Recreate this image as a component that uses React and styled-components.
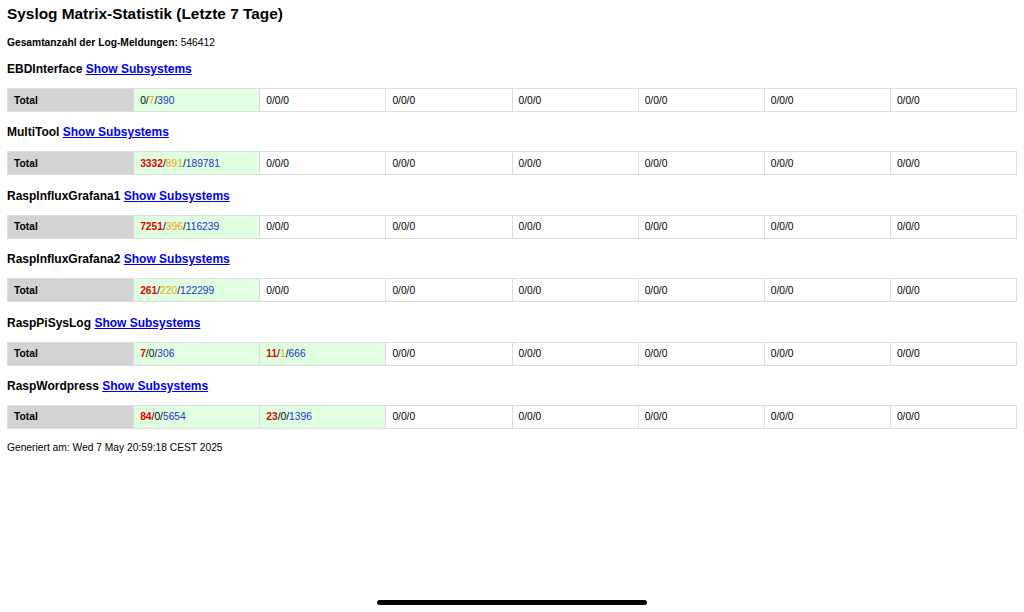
import React from "react";
import styled, { createGlobalStyle } from "styled-components";

const Global = createGlobalStyle`
  html, body { margin: 0; padding: 0; background: #fff; }
  body { font-family: "Liberation Sans", Arial, sans-serif; color: #000; }
`;

const Page = styled.div`
  padding: 4px 7px 0 7px;
  display: flex;
  flex-direction: column;
  min-height: 612px;
  box-sizing: border-box;
`;

const Title = styled.h1`
  font-size: 15.4px;
  font-weight: bold;
  margin: 0;
  line-height: 20px;
`;

const Summary = styled.p`
  font-size: 10.25px;
  margin: 12px 0 0 0;
  line-height: 13px;
`;

const Section = styled.section`
  display: flex;
  flex-direction: column;
`;

const Heading = styled.h3`
  font-size: 12px;
  font-weight: bold;
  margin: ${(p) => (p.$first ? "12px" : "12.4px")} 0 0 0;
  line-height: 16px;
`;

const Link = styled.a`
  color: #0000ee;
  text-decoration: underline;
  cursor: pointer;
`;

const Table = styled.table`
  margin-top: 11px;
  width: 100%;
  border-collapse: collapse;
  table-layout: fixed;
  font-size: 10.25px;
`;

const Cell = styled.td`
  border: 1px solid #ddd;
  height: 23px;
  padding: 0 6px;
  box-sizing: border-box;
  background: ${(p) => (p.$label ? "#d3d3d3" : p.$active ? "#e0ffe0" : "#fff")};
  font-weight: ${(p) => (p.$label ? "bold" : "normal")};
  white-space: nowrap;
`;

const Num = styled.span`
  color: ${(p) => (p.$kind === "err" ? "#e00000" : p.$kind === "warn" ? "#e5a50a" : p.$kind === "info" ? "#2233cc" : "#000")};
  font-weight: ${(p) => (p.$kind === "err" ? "bold" : "normal")};
`;

const Footer = styled.p`
  font-size: 10.25px;
  margin: 12px 0 0 0;
  line-height: 13px;
`;

const HomeBar = styled.div`
  position: absolute;
  left: 377px;
  top: 600px;
  width: 270px;
  height: 5px;
  border-radius: 3px;
  background: #000;
`;

const systems = [
  { name: "EBDInterface", cells: [[0, 7, 390]] },
  { name: "MultiTool", cells: [[3332, 891, 189781]] },
  { name: "RaspInfluxGrafana1", cells: [[7251, 396, 116239]] },
  { name: "RaspInfluxGrafana2", cells: [[261, 220, 122299]] },
  { name: "RaspPiSysLog", cells: [[7, 0, 306], [11, 1, 666]] },
  { name: "RaspWordpress", cells: [[84, 0, 5654], [23, 0, 1396]] },
];

function Value({ v }) {
  const [e, w, i] = v;
  const active = e + w + i > 0;
  if (!active) return <Cell>0/0/0</Cell>;
  return (
    <Cell $active>
      <Num $kind={e > 0 ? "err" : undefined}>{e}</Num>/
      <Num $kind={w > 0 ? "warn" : undefined}>{w}</Num>/
      <Num $kind={i > 0 ? "info" : undefined}>{i}</Num>
    </Cell>
  );
}

export default function App() {
  return (
    <>
      <Global />
      <Page>
        <Title>Syslog Matrix-Statistik (Letzte 7 Tage)</Title>
        <Summary>
          <b>Gesamtanzahl der Log-Meldungen:</b> 546412
        </Summary>
        {systems.map((s, idx) => {
          const vals = [...s.cells];
          while (vals.length < 7) vals.push([0, 0, 0]);
          return (
            <Section key={s.name}>
              <Heading $first={idx === 0}>
                {s.name} <Link>Show Subsystems</Link>
              </Heading>
              <Table>
                <tbody>
                  <tr>
                    <Cell $label>Total</Cell>
                    {vals.map((v, k) => (
                      <Value key={k} v={v} />
                    ))}
                  </tr>
                </tbody>
              </Table>
            </Section>
          );
        })}
        <Footer>Generiert am: Wed 7 May 20:59:18 CEST 2025</Footer>
      </Page>
      <HomeBar />
    </>
  );
}
